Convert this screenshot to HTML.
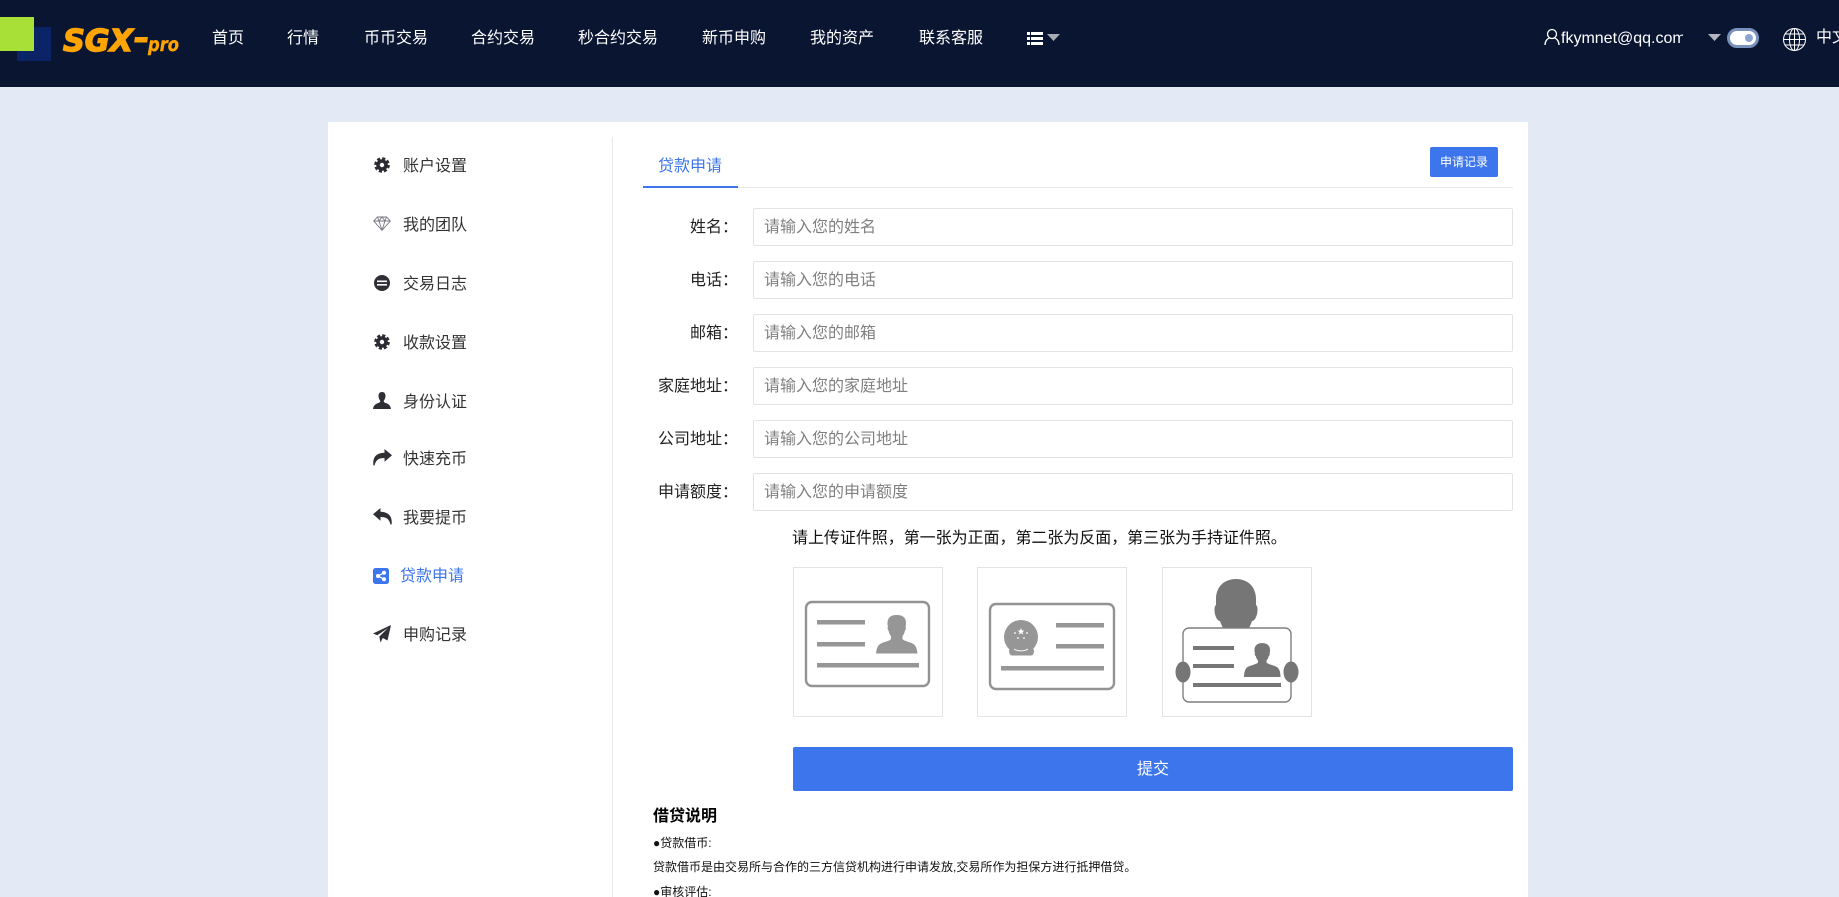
<!DOCTYPE html>
<html lang="zh-CN">
<head>
<meta charset="utf-8">
<title>贷款申请</title>
<style>
*{box-sizing:border-box}
html,body{margin:0;padding:0;width:1839px;height:897px;overflow:hidden;background:#e3eaf5}
body{position:relative;font-family:"Liberation Sans","Noto Sans CJK SC",sans-serif;color:#333}
.a{position:absolute;white-space:nowrap}
header{position:absolute;left:0;top:0;width:1839px;height:87px;background:#0a1532}
.nav{position:absolute;top:27px;height:24px;line-height:24px;font-size:16px;color:#fff;white-space:nowrap}
.card{position:absolute;left:328px;top:122px;width:1200px;height:775px;background:#fff}
.side{position:absolute;left:403px;height:24px;line-height:24px;font-size:16px;color:#333;white-space:nowrap}
.ic{position:absolute;display:block}
.lb{position:absolute;left:640px;width:98px;height:24px;line-height:24px;text-align:right;font-size:16px;color:#222;white-space:nowrap}
input{position:absolute;left:753px;width:760px;height:38px;border:1px solid #e3e3e3;border-radius:2px;background:#fff;padding:2px 10px 0;font:16px "Liberation Sans","Noto Sans CJK SC",sans-serif;outline:none}
input::placeholder{color:#808080;opacity:1}
.box{position:absolute;top:567px;width:150px;height:150px;border:1px solid #e3e3e3;background:#fff}
.box svg{position:absolute;left:-1px;top:-1px;display:block}
.t12{position:absolute;left:653px;font-size:12px;line-height:18px;height:18px;color:#111;white-space:nowrap}
</style>
</head>
<body>
<header>
  <div class="a" style="left:17px;top:27px;width:34px;height:34px;background:#0b2468"></div>
  <div class="a" style="left:0;top:17px;width:34px;height:34px;background:#a8e037"></div>
  <svg class="ic" style="left:60px;top:22px" width="124" height="38" viewBox="0 0 124 38">
    <text x="3" y="29" font-family="DejaVu Sans" font-weight="700" font-style="italic" font-size="30" fill="#ffa400" stroke="#ffa400" stroke-width="1.400" textLength="70" lengthAdjust="spacingAndGlyphs">SGX</text>
    <rect x="77" y="15" width="13" height="5.500" fill="#ffa400" transform="skewX(-8)"/>
    <text x="88" y="29" font-family="DejaVu Sans" font-weight="700" font-style="italic" font-size="19" fill="#ffa400" stroke="#ffa400" stroke-width=".4" textLength="31" lengthAdjust="spacingAndGlyphs">pro</text>
  </svg>
  <div class="nav" style="left:212px">首页</div>
  <div class="nav" style="left:287px">行情</div>
  <div class="nav" style="left:364px">币币交易</div>
  <div class="nav" style="left:471px">合约交易</div>
  <div class="nav" style="left:578px">秒合约交易</div>
  <div class="nav" style="left:702px">新币申购</div>
  <div class="nav" style="left:810px">我的资产</div>
  <div class="nav" style="left:919px">联系客服</div>
  <svg class="ic" style="left:1027px;top:31px" width="34" height="15" viewBox="0 0 34 15">
    <g fill="#fff"><rect x="0" y="1" width="3" height="3"/><rect x="0" y="6" width="3" height="3"/><rect x="0" y="11" width="3" height="3"/><rect x="4" y="1" width="12" height="3"/><rect x="4" y="6" width="12" height="3"/><rect x="4" y="11" width="12" height="3"/></g>
    <path d="M20 3h13l-6.500 7z" fill="#a8abb6"/>
  </svg>
  <svg class="ic" style="left:1544px;top:28px" width="16" height="18" viewBox="0 0 16 18" fill="none" stroke="#fff" stroke-width="1.300">
    <circle cx="8" cy="6" r="4.500"/><path d="M1 17c0-4 2.500-6.500 4.500-7M15 17c0-4-2.500-6.500-4.500-7"/>
  </svg>
  <div class="a" style="left:1561px;top:27px;width:122px;height:24px;line-height:24px;font-size:16px;color:#fff;overflow:hidden">fkymnet@qq.com</div>
  <svg class="ic" style="left:1708px;top:34px" width="13" height="7" viewBox="0 0 13 7"><path d="M0 0h13l-6.500 7z" fill="#b4b6bf"/></svg>
  <div class="a" style="left:1727px;top:28px;width:32px;height:20px;border-radius:10px;background:#fff;border:3px solid #7891bd"></div>
  <div class="a" style="left:1745px;top:34px;width:8px;height:8px;border-radius:50%;background:#8aa5d2"></div>
  <svg class="ic" style="left:1783px;top:28px" width="23" height="23" viewBox="0 0 23 23" fill="none" stroke="#fff" stroke-width="1">
    <circle cx="11.500" cy="11.500" r="11"/><ellipse cx="11.500" cy="11.500" rx="5" ry="11"/><path d="M11.500 .5v22M.5 11.500h22M2 6h19M2 17h19"/>
  </svg>
  <div class="a" style="left:1816px;top:26px;height:24px;line-height:24px;font-size:16px;color:#fff">中文</div>
</header>

<div class="card"></div>
<div class="a" style="left:612px;top:137px;width:1px;height:760px;background:#e6e6e6"></div>

<svg class="ic" style="left:374px;top:157px" width="16" height="16" viewBox="0 0 16 16"><circle cx="8" cy="8" r="6.500" fill="none" stroke="#2b2b33" stroke-width="2.600" stroke-dasharray="3.100 2"/><circle cx="8" cy="8" r="4" fill="none" stroke="#2b2b33" stroke-width="3.600"/></svg>
<div class="side" style="top:155px">账户设置</div>

<svg class="ic" style="left:373px;top:216px" width="18" height="15" viewBox="0 0 18 15" fill="none" stroke="#77777f" stroke-width=".9"><path d="M4.500 1h9L17.300 5 9 14.300.7 5zM.7 5h16.600M4.500 1 6 5l3 9.300L12 5l1.500-4M6 5l3-4 3 4"/></svg>
<div class="side" style="top:214px">我的团队</div>

<svg class="ic" style="left:374px;top:275px" width="16" height="16" viewBox="0 0 16 16"><circle cx="8" cy="8" r="8" fill="#2f3036"/><rect x="3" y="5.500" width="10" height="1.600" fill="#fff"/><rect x="3" y="9" width="10" height="1.600" fill="#fff"/></svg>
<div class="side" style="top:273px">交易日志</div>

<svg class="ic" style="left:374px;top:334px" width="16" height="16" viewBox="0 0 16 16"><circle cx="8" cy="8" r="6.500" fill="none" stroke="#2b2b33" stroke-width="2.600" stroke-dasharray="3.100 2"/><circle cx="8" cy="8" r="4" fill="none" stroke="#2b2b33" stroke-width="3.600"/></svg>
<div class="side" style="top:332px">收款设置</div>

<svg class="ic" style="left:373px;top:392px" width="18" height="17" viewBox="0 0 18 17"><path d="M9 0c2.400 0 3.500 1.700 3.500 4 0 1.900-.8 3.500-1.600 4.500-.5 1.300.2 2 1.700 2.500 2.200.7 4.900 1.800 5.400 6H0c.5-4.200 3.200-5.300 5.400-6 1.500-.5 2.200-1.200 1.700-2.500C6.300 7.500 5.500 5.900 5.500 4 5.500 1.700 6.600 0 9 0z" fill="#2f3036"/></svg>
<div class="side" style="top:391px">身份认证</div>

<svg class="ic" style="left:373px;top:449px" width="19" height="17" viewBox="0 0 19 17"><path d="M11.500 0 19 6.300l-7.500 6.400V9C6 9 3 10.500 1.500 16.500H.4C-.6 8 3.500 4 11.500 3.700z" fill="#2f3036"/></svg>
<div class="side" style="top:448px">快速充币</div>

<svg class="ic" style="left:373px;top:508px" width="19" height="17" viewBox="0 0 19 17"><path d="M7.500 0 0 6.300l7.500 6.400V9c5.500 0 8.500 1.500 10 7.500h1.100C19.600 8 15.500 4 7.500 3.700z" fill="#2f3036"/></svg>
<div class="side" style="top:507px">我要提币</div>

<svg class="ic" style="left:373px;top:568px" width="16" height="16" viewBox="0 0 16 16"><rect width="16" height="16" rx="2.500" fill="#3d75ec"/><path d="M11 4.800 5 8l6 3.200" fill="none" stroke="#fff" stroke-width="1.200"/><circle cx="11" cy="4.800" r="2" fill="#fff"/><circle cx="5" cy="8" r="2" fill="#fff"/><circle cx="11" cy="11.200" r="2" fill="#fff"/></svg>
<div class="side" style="left:400px;top:565px;color:#3d75ec">贷款申请</div>

<svg class="ic" style="left:373px;top:625px" width="18" height="18" viewBox="0 0 18 18"><path d="M18 0 14.500 15.500 9.800 13 7.500 17.500 6.300 11.500 15 3 4.300 10.300 0 8.500z" fill="#2f3036"/></svg>
<div class="side" style="left:403px;top:624px">申购记录</div>

<div class="a" style="left:643px;top:187px;width:870px;height:1px;background:#e6e6e6"></div>
<div class="a" style="left:643px;top:186px;width:95px;height:2px;background:#3d75ec"></div>
<div class="a" style="left:658px;top:155px;height:24px;line-height:24px;font-size:16px;color:#3d75ec">贷款申请</div>
<div class="a" style="left:1430px;top:147px;width:68px;height:30px;line-height:30px;text-align:center;font-size:12px;color:#fff;background:#3d75ec;border-radius:2px">申请记录</div>

<div class="lb" style="top:216px">姓名：</div>
<input style="top:208px" placeholder="请输入您的姓名">
<div class="lb" style="top:269px">电话：</div>
<input style="top:261px" placeholder="请输入您的电话">
<div class="lb" style="top:322px">邮箱：</div>
<input style="top:314px" placeholder="请输入您的邮箱">
<div class="lb" style="top:375px">家庭地址：</div>
<input style="top:367px" placeholder="请输入您的家庭地址">
<div class="lb" style="top:428px">公司地址：</div>
<input style="top:420px" placeholder="请输入您的公司地址">
<div class="lb" style="top:481px">申请额度：</div>
<input style="top:473px" placeholder="请输入您的申请额度">

<div class="a" style="left:792px;top:527px;height:24px;line-height:24px;font-size:16px;color:#111;letter-spacing:-.04px">请上传证件照，第一张为正面，第二张为反面，第三张为手持证件照。</div>

<div class="box" style="left:793px">
  <svg width="150" height="150" viewBox="0 0 150 150">
    <rect x="13" y="35" width="123" height="84" rx="6" fill="#fff" stroke="#939393" stroke-width="2.400"/>
    <g fill="#969696"><rect x="24" y="53" width="48" height="4.500"/><rect x="24" y="75" width="48" height="4.500"/><rect x="24" y="96" width="102" height="4.500"/>
    <path d="M104 48c6 0 9 3 9 8 0 2-.2 3-.5 4 .6.400.6 2.500-.5 3.500-.5 2.500-1.500 4.500-2.500 5.500v3c1 2 8 3 11 5 2.500 1.700 3.500 5 4 9.500H83c.5-4.500 1.500-7.800 4-9.500 3-2 10-3 11-5v-3c-1-1-2-3-2.500-5.500-1.100-1-1.100-3.100-.5-3.500-.3-1-.5-2-.5-4 0-5 3-8 9-8z"/></g>
  </svg>
</div>
<div class="box" style="left:977px">
  <svg width="150" height="150" viewBox="0 0 150 150">
    <rect x="13" y="37" width="124" height="85" rx="6" fill="#fff" stroke="#939393" stroke-width="2.400"/>
    <g fill="#969696"><rect x="79" y="56" width="48" height="4.500"/><rect x="79" y="77" width="48" height="4.500"/><rect x="24" y="99" width="103" height="4.500"/>
    <circle cx="44" cy="70" r="17"/><path d="M34 78h21l2 6c0 2-1 4.500-3 4.500H35c-2 0-3-2.500-3-4.500z"/></g>
    <path d="M37 82c4 2.500 10 2.500 14 0" fill="none" stroke="#fff" stroke-width="1"/>
    <g fill="#fff"><path d="m44 61 1 2.500h2.500l-2 1.600.8 2.500-2.300-1.500-2.300 1.500.8-2.500-2-1.600H43z"/><circle cx="38" cy="66" r=".9"/><circle cx="50" cy="66" r=".9"/><circle cx="41" cy="71" r=".9"/><circle cx="47" cy="71" r=".9"/></g>
  </svg>
</div>
<div class="box" style="left:1162px">
  <svg width="150" height="150" viewBox="0 0 150 150">
    <path d="M74 12c12 0 20 8 20 20v6c2 1 2 8 0 12-1 3-3 4-4 4-1 3-2 5-3 7H61c-1-2-2-4-3-7-1 0-3-1-4-4-2-4-2-11 0-12v-6c0-12 8-20 20-20z" fill="#767676"/>
    <rect x="21" y="61" width="108" height="74" rx="6" fill="#fff" stroke="#7f7f7f" stroke-width="1.400"/>
    <g fill="#767676"><rect x="31" y="79" width="41" height="4"/><rect x="31" y="97" width="41" height="4"/><rect x="31" y="116" width="88" height="4"/>
    <ellipse cx="21" cy="105" rx="7.500" ry="10.500"/><ellipse cx="129" cy="105" rx="7.500" ry="10.500"/>
    <path d="M100 76c5 0 8 2.500 8 7 0 1.500 0 2.500-.5 3 .5.500.3 2.500-.7 3-.5 2-1.300 3.500-2.300 4.500v2c1 1.500 6 2.500 9.500 4 3 1.300 4.500 5 4.500 10.500H82c0-5.500 1.500-9.200 4.500-10.500 3.500-1.500 8.500-2.500 9.500-4v-2c-1-1-1.800-2.500-2.300-4.500-1-.5-1.200-2.500-.7-3-.5-.5-.5-1.500-.5-3 0-4.500 3-7 8-7z"/></g>
  </svg>
</div>

<div class="a" style="left:793px;top:747px;width:720px;height:44px;line-height:46px;text-align:center;font-size:16px;color:#fff;background:#3d75ec;border-radius:2px">提交</div>

<div class="a" style="left:653px;top:805px;height:24px;line-height:24px;font-size:16px;font-weight:700;color:#000">借贷说明</div>
<div class="t12" style="top:834px">●贷款借币:</div>
<div class="t12" style="top:858px">贷款借币是由交易所与合作的三方信贷机构进行申请发放,交易所作为担保方进行抵押借贷。</div>
<div class="t12" style="top:883px">●审核评估:</div>
</body>
</html>
